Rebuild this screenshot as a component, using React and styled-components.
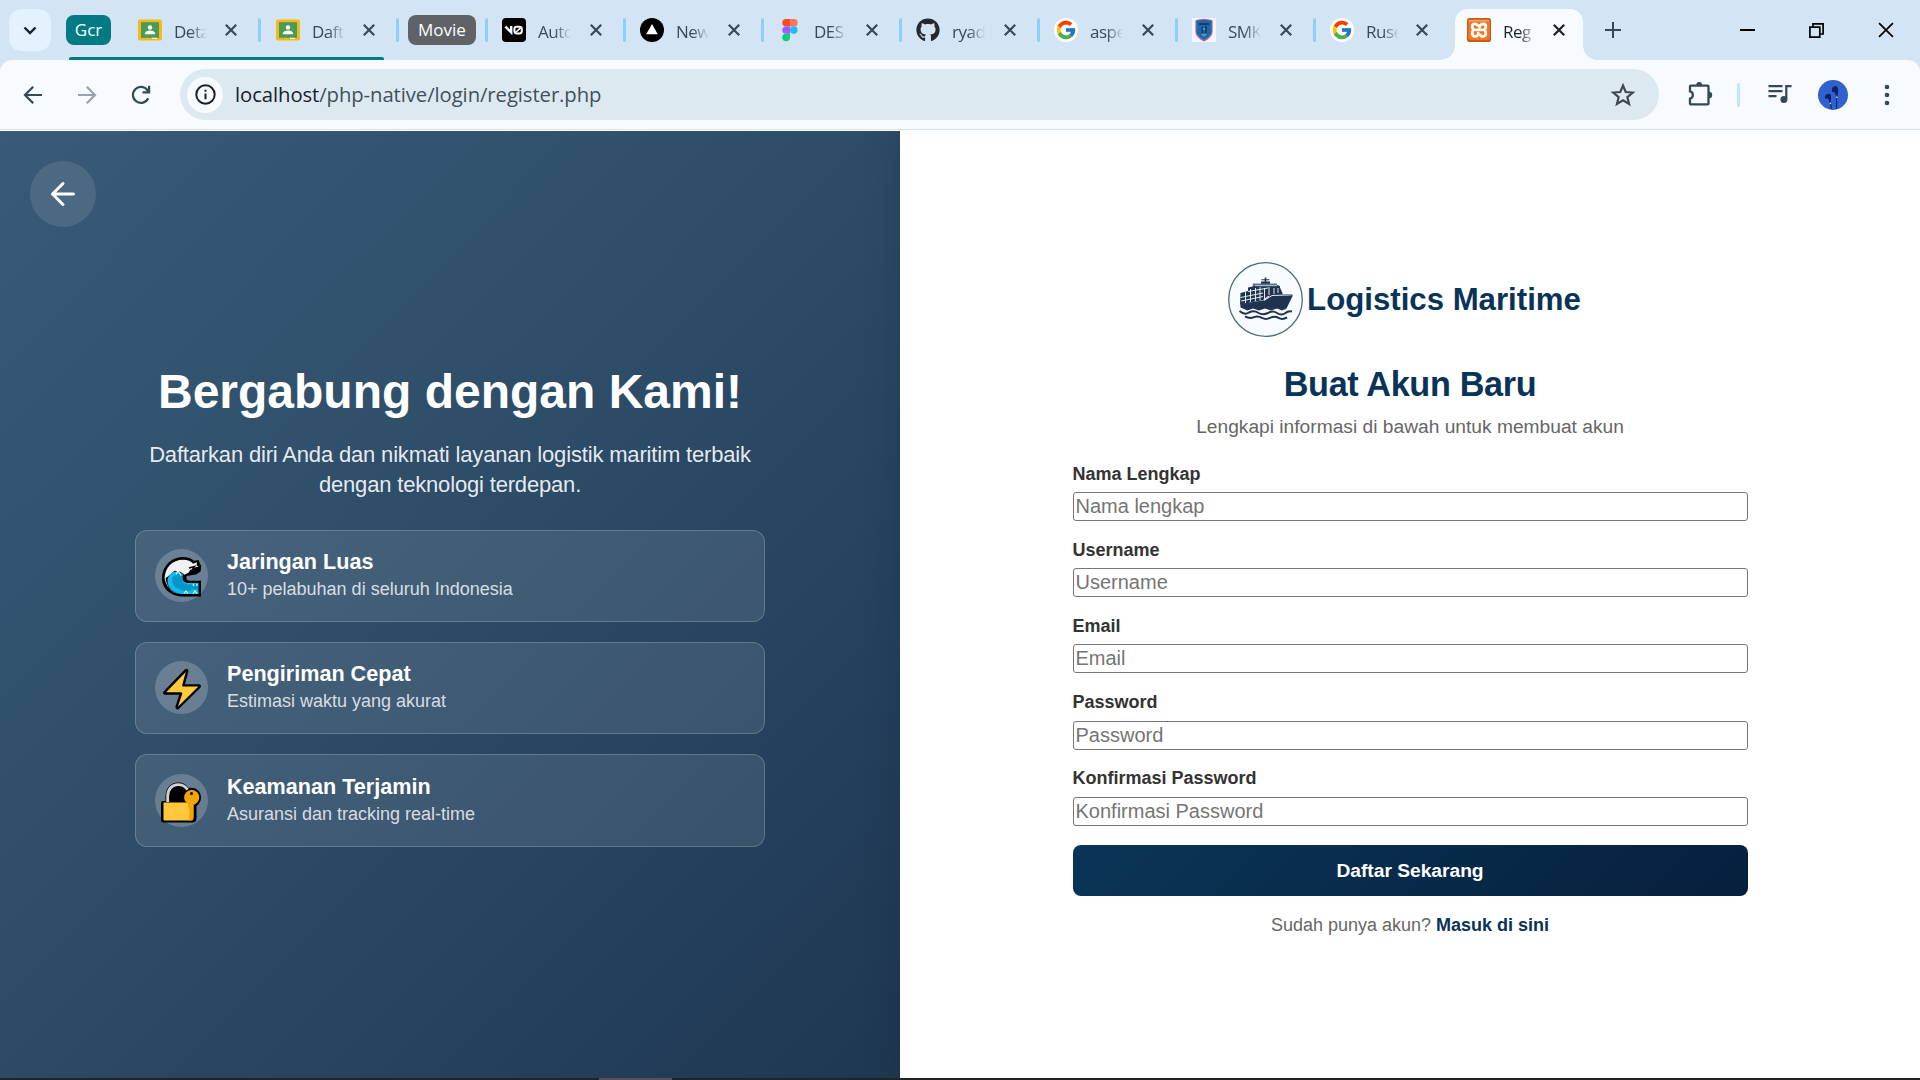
import React from "react";
import styled, { createGlobalStyle, css } from "styled-components";
import { FaGithub } from "react-icons/fa";
import { FcGoogle } from "react-icons/fc";

const GlobalStyle = createGlobalStyle`
  *, *::before, *::after { box-sizing: border-box; }
  body {
    margin: 0;
    background: #fff;
    font-family: "Liberation Sans", Arial, sans-serif;
    overflow: hidden;
  }
  h1, h2, h3, p { margin: 0; }
`;

const uiFont = `"Open Sans", "Noto Sans", sans-serif`;

/* ---------- window ---------- */

const Window = styled.div`
  width: 1920px;
  height: 1080px;
  display: flex;
  flex-direction: column;
  background: #d3e5f4;
`;

const TabStrip = styled.header`
  height: 60px;
  display: flex;
  align-items: center;
  padding-left: 9px;
  font-family: ${uiFont};
`;

const TabSearch = styled.button`
  width: 42px;
  height: 42px;
  border: 0;
  padding: 0;
  border-radius: 13px;
  background: #e4f2ff;
  display: grid;
  place-items: center;
`;

const TabGroup = styled.div`
  position: relative;
  height: 60px;
  display: flex;
  align-items: center;
  margin-left: 15px;
  &::after {
    content: "";
    position: absolute;
    left: 3px;
    bottom: 0;
    width: 315px;
    height: 3px;
    border-radius: 2px 2px 0 0;
    background: #007b83;
  }
`;

const GroupChip = styled.span`
  height: 30px;
  width: ${(p) => p.$width}px;
  margin-left: ${(p) => p.$before || 0}px;
  margin-right: ${(p) => p.$after}px;
  border-radius: 8px;
  background: ${(p) => p.$color};
  color: #fff;
  font-size: 17px;
  line-height: 29px;
  text-align: center;
`;

const Separator = styled.i`
  width: 3px;
  height: 24px;
  border-radius: 1.5px;
  background: #8bd0fb;
  flex: none;
`;

const TabBox = styled.div`
  position: relative;
  width: ${(p) => p.$width || 138}px;
  height: 42px;
  display: flex;
  align-items: center;
  flex: none;
  padding-left: ${(p) => p.$lead || 14}px;
  color: #384a57;
  ${(p) =>
    p.$active &&
    css`
      height: 51px;
      margin-top: 9px;
      padding-bottom: 9px;
      border-radius: 13px 13px 0 0;
      background: #f7faff;
      color: #1b2730;
      &::before,
      &::after {
        content: "";
        position: absolute;
        bottom: 0;
        width: 14px;
        height: 14px;
      }
      &::before {
        left: -14px;
        background: radial-gradient(circle at 0 0, transparent 13.5px, #f7faff 14px);
      }
      &::after {
        right: -14px;
        background: radial-gradient(circle at 100% 0, transparent 13.5px, #f7faff 14px);
      }
    `}
`;

const Favicon = styled.span`
  width: 24px;
  height: 24px;
  flex: none;
  display: grid;
  place-items: center;
  border-radius: ${(p) => (p.$round ? "50%" : 0)};
  background: ${(p) => (p.$round ? "#fff" : "none")};
  svg { display: block; }
`;

const TabTitle = styled.span`
  width: 33px;
  margin: 3px 0 0 12px;
  overflow: hidden;
  white-space: nowrap;
  font-size: 17px;
  line-height: 24px;
  letter-spacing: -0.5px;
  mask-image: linear-gradient(90deg, #000 50%, transparent 100%);
`;

const TabClose = styled.span`
  width: 24px;
  height: 24px;
  margin: 0 auto 0 ${(p) => p.$gap}px;
  display: grid;
  place-items: center;
  flex: none;
`;

const NewTab = styled.span`
  width: 24px;
  height: 24px;
  margin-left: 18px;
  display: grid;
  place-items: center;
`;

const WindowControls = styled.div`
  margin-left: auto;
  display: grid;
  grid-template-columns: repeat(3, 69px);
  place-items: center;
`;

const Toolbar = styled.div`
  height: 71px;
  display: flex;
  align-items: center;
  padding: 0 0 2px 12px;
  border-radius: 12px 12px 0 0;
  background: linear-gradient(#f7faff 69px, #dce2e9 69px, #dce2e9 70px, #fff 70px);
  font-family: ${uiFont};
`;

const ToolButton = styled.span`
  width: ${(p) => p.$width || 42}px;
  height: 42px;
  margin-left: ${(p) => p.$gap || 0}px;
  display: grid;
  place-items: center;
  flex: none;
`;

const AddressBar = styled.div`
  width: 1479px;
  height: 51px;
  margin: 0 0 0 18px;
  padding: 0 15px 0 7px;
  border-radius: 26px;
  background: #dde9f1;
  display: flex;
  align-items: center;
  color: #41505b;
  font-size: 20.3px;
`;

const SiteInfo = styled.span`
  width: 36px;
  height: 36px;
  border-radius: 50%;
  background: #f7faff;
  display: grid;
  place-items: center;
  margin-right: 12px;
`;

const Url = styled.span`
  flex: 1;
  letter-spacing: -0.08px;
  line-height: 28px;
  padding-bottom: 2px;
  b { font-weight: 400; color: #17212a; }
`;

const ToolDivider = styled(Separator)`
  background: #c2e4fc;
  margin-left: 16px;
`;

/* ---------- page ---------- */

const Page = styled.main`
  height: 947px;
  display: flex;
  background: #fff;
`;

const Promo = styled.section`
  position: relative;
  width: 900px;
  display: flex;
  flex-direction: column;
  align-items: center;
  justify-content: center;
  color: #fff;
  background: linear-gradient(135deg, #395b77 0%, #2c4b67 50%, #24405d 77%, #1f3751 100%);
`;

const BackButton = styled.button`
  position: absolute;
  left: 30px;
  top: 30px;
  width: 66px;
  height: 66px;
  border: 0;
  padding: 0;
  border-radius: 50%;
  background: rgba(255, 255, 255, 0.1);
  display: grid;
  place-items: center;
`;

const PromoTitle = styled.h1`
  font-size: 48px;
  line-height: 58px;
  font-weight: 700;
  white-space: nowrap;
`;

const PromoText = styled.p`
  width: 630px;
  margin: 19px 0 30px;
  font-size: 22px;
  line-height: 30px;
  letter-spacing: -0.17px;
  text-align: center;
  color: rgba(255, 255, 255, 0.9);
`;

const Features = styled.div`
  width: 630px;
  display: flex;
  flex-direction: column;
  gap: 20px;
`;

const Feature = styled.article`
  height: 92px;
  padding: 0 19px;
  display: flex;
  align-items: center;
  gap: 19px;
  border: 1px solid rgba(255, 255, 255, 0.2);
  border-radius: 12px;
  background: rgba(255, 255, 255, 0.1);
  &:last-child { height: 93px; }
`;

const FeatureIcon = styled.span`
  width: 53px;
  height: 53px;
  border-radius: 50%;
  background: rgba(255, 255, 255, 0.2);
  flex: none;
  svg { display: block; overflow: visible; }
`;

const FeatureTitle = styled.h3`
  font-size: 21.6px;
  line-height: 28px;
  font-weight: 700;
`;

const FeatureText = styled.p`
  font-size: 18px;
  line-height: 25px;
  margin: 1px 0;
  color: rgba(255, 255, 255, 0.8);
`;

const FormSide = styled.section`
  position: relative;
  flex: 1;
  display: flex;
  flex-direction: column;
  align-items: center;
  padding-top: 131px;
  background: #fff;
  box-shadow: -5px 0 34px rgba(0, 0, 0, 0.1);
  clip-path: inset(0 0 0 -60px);
`;

const Brand = styled.div`
  display: flex;
  align-items: center;
  gap: 4px;
  height: 75px;
  margin-right: 11px;
  color: #0a3358;
  font-size: 31.2px;
  font-weight: 700;
`;

const FormTitle = styled.h2`
  margin-top: 27px;
  color: #0a3358;
  font-size: 34.2px;
  line-height: 40px;
  font-weight: 700;
  letter-spacing: -0.32px;
`;

const FormLead = styled.p`
  margin-top: 10.5px;
  color: #666;
  font-size: 19.2px;
  line-height: 24px;
`;

const Form = styled.form`
  width: 675px;
  display: flex;
  flex-direction: column;
  margin-top: 24.1px;
`;

const Field = styled.label`
  display: flex;
  flex-direction: column;
  gap: 7.4px;
  margin-bottom: 17.8px;
  color: #333;
  font-size: 18px;
  line-height: 22px;
  font-weight: 700;
`;

const Input = styled.input`
  width: 100%;
  height: 29px;
  margin: 0;
  padding: 1px 2px;
  border: 1px solid #767676;
  border-radius: 3px;
  background: #fff;
  font: 400 20px "Liberation Sans", Arial, sans-serif;
  &::placeholder { color: #757575; opacity: 1; }
`;

const Submit = styled.button`
  height: 51px;
  margin-top: 1.4px;
  padding-top: 2px;
  border: 0;
  border-radius: 8px;
  background: linear-gradient(135deg, #0a3558 0%, #06203d 100%);
  color: #fff;
  font: 700 19.2px "Liberation Sans", Arial, sans-serif;
`;

const Login = styled.p`
  margin-top: 17px;
  color: #666;
  font-size: 18px;
  line-height: 24px;
  a { color: #0a3358; font-weight: 700; }
`;

const Taskbar = styled.footer`
  height: 2px;
  display: flex;
  background: #222324;
  padding-left: 599px;
  &::before { content: ""; width: 73px; height: 2px; background: #5b5155; }
`;

/* ---------- drawings ---------- */

const Cross = ({ size = 12, color = "#344b58", w = 2.2 }) => (
  <svg width={size} height={size} viewBox="0 0 12 12" stroke={color} strokeWidth={w}>
    <path d="M.8 .8 11.2 11.2M11.2 .8 .8 11.2" />
  </svg>
);

const Classroom = () => (
  <svg width="24" height="24" viewBox="0 0 24 24">
    <rect y="1.5" width="24" height="21" rx="1.8" fill="#f6b915" />
    <rect x="3" y="4.2" width="18" height="15.6" fill="#4a9b58" />
    <circle cx="12" cy="9.4" r="2.2" fill="#fff" />
    <path d="M6.8 16.2c0-2.6 3-3.6 5.2-3.6s5.2 1 5.2 3.6z" fill="#fff" />
    <path d="M14 19.8h5v1.2h-5z" fill="#e8f3e8" />
  </svg>
);

const VZero = () => (
  <svg width="24" height="24" viewBox="0 0 24 24">
    <rect width="24" height="24" rx="4" fill="#000" />
    <path d="M3.4 8.600 9.200 14.400V8" fill="none" stroke="#fff" strokeWidth="2.400" />
    <rect x="12.400" y="8.800" width="7.400" height="6.600" rx="2.400" fill="none" stroke="#fff" strokeWidth="2" />
    <path d="M13 15 19.400 9.200" stroke="#fff" strokeWidth="1.600" />
  </svg>
);

const Vercel = () => (
  <svg width="24" height="24" viewBox="0 0 24 24">
    <circle cx="12" cy="12" r="12" fill="#000" />
    <path d="M12 6 17.8 16.2H6.2z" fill="#fff" />
  </svg>
);

const Figma = () => (
  <svg width="16" height="24" viewBox="0 0 16 24">
    <path d="M4 1h4v7.400H4A3.700 3.700 0 0 1 4 1z" fill="#f24e1e" />
    <path d="M8 1h4a3.700 3.700 0 0 1 0 7.400H8z" fill="#ff7262" />
    <path d="M4 8.400h4v7.400H4a3.700 3.700 0 0 1 0-7.400z" fill="#a259ff" />
    <circle cx="11.800" cy="12.100" r="3.800" fill="#1abcfe" />
    <path d="M4 15.800h4v3.700a3.900 3.700 0 1 1-4-3.700z" fill="#0acf83" />
  </svg>
);

const School = () => (
  <svg width="24" height="24" viewBox="0 0 24 24">
    <rect width="24" height="24" fill="#f6f4f8" />
    <path d="M3.4 2.2Q12-.8 20.6 2.2V14Q20 20 12 23.4 4 20 3.4 14z" fill="#9c6f96" />
    <path d="M4.6 3Q12 .8 19.4 3v11Q18.6 18.6 12 21.8 5.400 18.600 4.600 14z" fill="#1f64ae" />
    <path d="M7 5h10v2H7zM9.500 9h1.800v6H9.500zM13 8h1.800v7H13z" fill="#163d68" />
    <path d="M9 16h6l-3 3z" fill="#58a0a0" />
    <circle cx="12" cy="11" r="1.300" fill="#4f9a8c" />
  </svg>
);

const Xampp = () => (
  <svg width="24" height="24" viewBox="0 0 24 24">
    <rect width="24" height="24" rx="2.500" fill="#c95a16" />
    <rect x="1.200" y="1.500" width="21.600" height="20.500" rx="2" fill="#f37623" />
    <path d="M2 2h20v1.500H2z" fill="#eba577" />
    <path d="M10.500 7.200C9 5 5.200 5.600 5.200 8.600c0 1.700.9 2.700 2 3.200C6 12.400 5.200 13.700 5.200 15.300c0 3.300 4 4.200 5.600 1.600l.4-1.600M13.500 7.200c1.500-2.200 5.300-1.600 5.300 1.400 0 1.700-.9 2.700-2 3.200 1.200.6 2 1.900 2 3.500 0 3.300-4 4.200-5.600 1.600M9.600 11.900h5M13 7.400l-.6 1.800" fill="none" stroke="#fff" strokeWidth="2.800" strokeLinejoin="round" strokeLinecap="round" />
  </svg>
);

const ArrowGlyph = ({ flip, color = "#344955" }) => (
  <svg width="20" height="20" viewBox="0 0 20 20" fill="none" stroke={color} strokeWidth="2.200" transform={flip ? "scale(-1 1)" : undefined}>
    <path d="M19 10H2.500M10.200 1.800 2 10l8.200 8.200" />
  </svg>
);

const Reload = () => (
  <svg width="20" height="20" viewBox="0 0 20 20" fill="none" stroke="#344955" strokeWidth="2.200">
    <path d="M17.200 13.300A8 8 0 1 1 16.500 5.300L17.500 6.600" />
    <path d="M18.100 .8v6.500h-6.600" />
  </svg>
);

const Info = () => (
  <svg width="21" height="21" viewBox="0 0 21 21" fill="none" stroke="#1b2226" strokeWidth="2">
    <circle cx="10.500" cy="10.500" r="9.200" />
    <path d="M10.500 9.600v5.600M10.500 5.800v2" />
  </svg>
);

const Star = () => (
  <svg width="26" height="26" viewBox="0 0 24 24" fill="none" stroke="#3d484f" strokeWidth="2">
    <path d="M12 3.200 14.500 9.200 21 9.700 16 13.900 17.600 20.300 12 16.900 6.400 20.300 8 13.900 3 9.700 9.500 9.200z" strokeLinejoin="miter" />
  </svg>
);

const Puzzle = () => (
  <svg width="26" height="28" viewBox="0 0 26 28">
    <path d="M4 4.600H20.500a1 1 0 0 1 1 1V22.400a1 1 0 0 1-1 1H4a1 1 0 0 1-1-1V17.600a3.700 3.700 0 0 0 0-7.200V5.600a1 1 0 0 1 1-1z" fill="none" stroke="#344955" strokeWidth="2.300" />
    <path d="M9.300 4a2.900 2.900 0 0 1 5.800 0zM22 10.800a3.200 3.200 0 0 1 0 6.400z" fill="#344955" />
  </svg>
);

const MediaNote = () => (
  <svg width="24" height="22" viewBox="0 0 24 22" fill="none" stroke="#344955" strokeWidth="2.200">
    <path d="M.5 2.200h14M.5 7.200h14M.5 12.200h8M18.300 15V2.200H23.500" />
    <circle cx="15.900" cy="15.400" r="3.500" fill="#344955" stroke="none" />
  </svg>
);

const Avatar = () => (
  <svg width="30" height="30" viewBox="0 0 30 30">
    <circle cx="15" cy="15" r="15" fill="#2f62cf" />
    <path d="M14 8q4-4 6 0v6l-1.500 3-1.500-4q-2-2-3-1zM7 16q3-4 6-1v5l-1.500 3-1-4q-1.500-1-3.500 0z" fill="#131f60" />
    <path d="M18.500 14v15M12 20l1.500 9" stroke="#172a7c" strokeWidth="1.300" fill="none" />
    <path d="M18.800 16.500v1.500M12.400 22.800v1.300" stroke="#d9dde8" strokeWidth="1.300" />
  </svg>
);

const Wave = () => (
  <svg width="53" height="53" viewBox="0 0 53 53">
    <path d="M45 47.500H29C16 47.500 7 40 7 29.500 7 17.500 16 8 28 8c5 0 8.500 1.500 11 3.700l4.500-.7 1.500 4 1.200 1.500-.6 6L41 25.500 31.500 27q-1 4 2.500 4.800H46V47.500z" fill="#000" />
    <path d="M9.700 29.500C9.700 18.500 17.500 10.700 28 10.700c5 0 8 1.500 10 4l4-1.500-.5 3 2 1.500-4.500 1 0 3-3.500-1-2 3-4 2-4-3-6-1-7 6z" fill="#f1f1f1" />
    <path d="M10 26q1 8 4 13 5 6 14 6-14 1-18.300-15z" fill="#f1f1f1" />
    <path d="M28 45c-9 0-15.500-5.500-15.500-13 0-5 4-9.500 9-9.500 3 0 4 1 6.500 3.200-2 5 1 8.300 6 8.300h9.500V45z" fill="#15b9ee" />
    <path d="M17 31c0-3 3-6.300 7-5.700 2 .2 2.800 1 3.400 1.800-1 5 1.600 8.400 6.600 8.400h9v6q-4-2.500-8 0-5 1.500-10-1-8-3-8-9.500z" fill="#0796c9" />
    <path d="m34 19 5.500-1.500-2.500 3.500 5-2M36 24l3-3" fill="none" stroke="#000" strokeWidth="1.500" />
    <path d="M21 25.500l2-4 3 5M29 44.500l2-2.500 2 2.500m5 0 2-2.500 2 2.500M38 35l1 2M42 35v2" fill="none" stroke="#e6f8fd" strokeWidth="1.200" />
  </svg>
);

const Bolt = () => (
  <svg width="53" height="53" viewBox="0 0 53 53">
    <path d="M30.600 9.300 9.400 31.300q-.7 1.200.8 1.200H26L21.700 45.500q-.2 2.300 1.500 1.500L44.500 26q.8-1.600-.8-1.600H28.400L32.200 10.200q.1-1.800-1.600-.9z" fill="#ffc83d" stroke="#000" strokeWidth="2.400" strokeLinejoin="round" />
  </svg>
);

const Lock = () => (
  <svg width="53" height="53" viewBox="0 0 53 53">
    <path d="M10.500 27V22.500C10.500 14 16 8.500 23 8.500c5 0 8 2 10.500 5.500 5-1.500 12.500 1.500 12.500 9.500 0 4-2 6.500-4.500 8.500V44.500q0 4-4 4H8.500q-2.500 0-2.500-2.500V29q0-2 2-2z" fill="#000" />
    <path d="M12.700 28v-5.500C12.700 15 17 10.700 23 10.700c4.500 0 7.500 1.800 9.500 5" fill="none" stroke="#d3d3d3" strokeWidth="2.800" />
    <path d="M8.500 28.500H31l7 1V44q0 2.500-2.500 2.500H9.500Q8.500 46.500 8.500 45z" fill="#ffc83d" />
    <path d="M35 30h3.500V44q0 2.500-2.500 2.500h-2z" fill="#f3a20b" />
    <circle cx="36.700" cy="23.500" r="7.600" fill="#f3a60c" />
    <path d="M33 29.500h5.500V43l-2 2-2-2.500 1.500-2-1.500-2 1.500-2.500-3-2z" fill="#f3a60c" />
    <circle cx="36.500" cy="19.600" r="1.500" fill="#000" />
  </svg>
);

const ShipLogo = () => (
  <svg width="75" height="75" viewBox="0 0 75 75">
    <circle cx="37.500" cy="37.500" r="36.800" fill="#f8fcff" stroke="#4e6b7e" strokeWidth="1.300" />
    <g fill="#1f3350">
      <path d="M36.700 15.500h1.600v5h-1.600zM33.500 17.200h8v1h-8zM33 19.500h9v2.500h-9z" />
      <path d="M25 21.500h24v1.500l3 1v6H24z" fill="#5b7288" />
      <path d="M12.500 31 20 29v-3.500l7-1.500 24-.5 3.500 7.500 0 2.500L40 34l-5 4-23 4.500z" />
      <path d="M12.300 42 36 38.200l7.500-5.500 20-.7 1.300 1.500L58.500 46.500 54 48.500l-5-2-6 2-6-2-6 2-6-2-5.500 2-7-3z" />
    </g>
    <g fill="none" stroke="#f8fcff" strokeWidth=".9">
      <path d="M12.500 35.500 35 31M13 39l22-4.500M20 29.500l20-3.500M17.500 30v11M22.500 27v13M27.500 26v13M32 25v13M36.500 26v11M41 25v8M46 26v6M50 26v5" />
      <path d="M36 38.500l8-5 19.500-.6" />
    </g>
    <path d="M27 23.700h22" stroke="#dce7ef" strokeWidth=".8" />
    <g fill="none" stroke="#1f3350" strokeWidth="2">
      <path d="M11.500 49q5 4.500 9.500 1.500 5-2.600 9.500.5 4.500 2.500 9.500 0 4.500-2.800 9 0t8.500 0q3-2.500 6.500-1.500" />
      <path d="M17 54.300q4.500 2.800 9 .8 4-1.600 8 .8 4 2 8 0 4.500-2.300 8.500 0t8.500-.6" />
    </g>
  </svg>
);

/* ---------- data ---------- */

const groupTabs = [
  { title: "Deta", icon: <Classroom /> },
  { title: "Daft", icon: <Classroom /> },
];

const tabs = [
  { title: "Auto", icon: <VZero /> },
  { title: "New", icon: <Vercel /> },
  { title: "DES", icon: <Figma /> },
  { title: "ryad", icon: <FaGithub size={24} color="#24292f" /> },
  { title: "aspe", icon: <FcGoogle size={22} />, round: true },
  { title: "SMK", icon: <School /> },
  { title: "Ruse", icon: <FcGoogle size={22} />, round: true, last: true },
];

const features = [
  { icon: <Wave />, title: "Jaringan Luas", text: "10+ pelabuhan di seluruh Indonesia" },
  { icon: <Bolt />, title: "Pengiriman Cepat", text: "Estimasi waktu yang akurat" },
  { icon: <Lock />, title: "Keamanan Terjamin", text: "Asuransi dan tracking real-time" },
];

const fields = [
  { label: "Nama Lengkap", hint: "Nama lengkap", type: "text" },
  { label: "Username", hint: "Username", type: "text" },
  { label: "Email", hint: "Email", type: "email" },
  { label: "Password", hint: "Password", type: "password" },
  { label: "Konfirmasi Password", hint: "Konfirmasi Password", type: "password" },
];

function Tab({ title, icon, round, last, active, lead }) {
  return (
    <TabBox $lead={lead} $active={active} $width={active ? 128 : last ? 139 : 138}>
      <Favicon $round={round}>{icon}</Favicon>
      <TabTitle>{title}</TabTitle>
      <TabClose $gap={last || active ? 11 : lead ? 12 : 13}>
        <Cross color={active ? "#1b2226" : undefined} />
      </TabClose>
      {!last && !active && <Separator />}
    </TabBox>
  );
}

export default function App() {
  return (
    <>
      <GlobalStyle />
      <Window>
        <TabStrip>
          <TabSearch>
            <svg width="14" height="9" viewBox="0 0 14 9" fill="none" stroke="#1b2226" strokeWidth="2.400">
              <path d="M1.500 1.500 7 7l5.500-5.500" />
            </svg>
          </TabSearch>
          <TabGroup>
            <GroupChip $width={45} $after={12} $color="#007b83">Gcr</GroupChip>
            {groupTabs.map((t) => <Tab key={t.title} {...t} lead={15} />)}
          </TabGroup>
          <GroupChip $width={68} $before={9} $after={9} $color="#5f6368">Movie</GroupChip>
          <Separator />
          {tabs.map((t) => <Tab key={t.title} {...t} />)}
          <Tab title="Reg" icon={<Xampp />} active lead={12} />
          <NewTab>
            <svg width="16" height="16" viewBox="0 0 16 16" stroke="#344955" strokeWidth="2">
              <path d="M8 0v16M0 8h16" />
            </svg>
          </NewTab>
          <WindowControls>
            <svg width="15" height="2" viewBox="0 0 15 2"><path d="M0 0h15v2H0z" /></svg>
            <svg width="15" height="15" viewBox="0 0 15 15" fill="none" stroke="#000" strokeWidth="1.700">
              <path d="M.9 4.200h9.900v9.900H.9zM4 4V.9h10.100V11H11" />
            </svg>
            <Cross size={16} color="#000" w={1.3} />
          </WindowControls>
        </TabStrip>

        <Toolbar>
          <ToolButton><ArrowGlyph /></ToolButton>
          <ToolButton $gap={12}><ArrowGlyph flip color="#9aa3ab" /></ToolButton>
          <ToolButton $gap={12}><Reload /></ToolButton>
          <AddressBar>
            <SiteInfo><Info /></SiteInfo>
            <Url><b>localhost</b>/php-native/login/register.php</Url>
            <ToolButton><Star /></ToolButton>
          </AddressBar>
          <ToolButton $gap={20}><Puzzle /></ToolButton>
          <ToolDivider />
          <ToolButton $gap={19}><MediaNote /></ToolButton>
          <ToolButton $gap={11}><Avatar /></ToolButton>
          <ToolButton $gap={12}>
            <svg width="6" height="22" viewBox="0 0 6 22" fill="#344955">
              <circle cx="3" cy="3" r="2.300" />
              <circle cx="3" cy="11" r="2.300" />
              <circle cx="3" cy="19" r="2.300" />
            </svg>
          </ToolButton>
        </Toolbar>

        <Page>
          <Promo>
            <BackButton>
              <svg width="26" height="26" viewBox="0 0 26 26" fill="none" stroke="#fff" strokeWidth="3" strokeLinecap="round" strokeLinejoin="round">
                <path d="M23.500 13H2.500M13 2.500 2.500 13 13 23.500" />
              </svg>
            </BackButton>
            <PromoTitle>Bergabung dengan Kami!</PromoTitle>
            <PromoText>
              Daftarkan diri Anda dan nikmati layanan logistik maritim terbaik
              <br />
              dengan teknologi terdepan.
            </PromoText>
            <Features>
              {features.map((f) => (
                <Feature key={f.title}>
                  <FeatureIcon>{f.icon}</FeatureIcon>
                  <div>
                    <FeatureTitle>{f.title}</FeatureTitle>
                    <FeatureText>{f.text}</FeatureText>
                  </div>
                </Feature>
              ))}
            </Features>
          </Promo>
          <FormSide>
            <Brand>
              <ShipLogo />
              <span>Logistics Maritime</span>
            </Brand>
            <FormTitle>Buat Akun Baru</FormTitle>
            <FormLead>Lengkapi informasi di bawah untuk membuat akun</FormLead>
            <Form>
              {fields.map((f) => (
                <Field key={f.label}>
                  {f.label}
                  <Input type={f.type} placeholder={f.hint} />
                </Field>
              ))}
              <Submit type="button">Daftar Sekarang</Submit>
            </Form>
            <Login>
              Sudah punya akun? <a>Masuk di sini</a>
            </Login>
          </FormSide>
        </Page>
        <Taskbar />
      </Window>
    </>
  );
}
